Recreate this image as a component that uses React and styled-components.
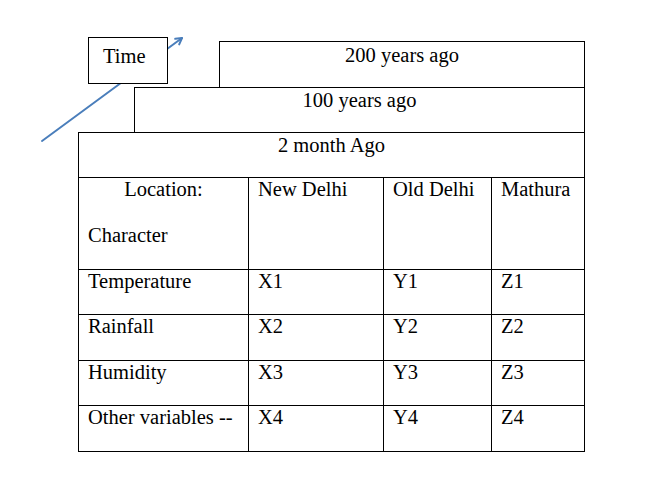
import React from "react";
import styled, { createGlobalStyle } from "styled-components";

const Global = createGlobalStyle`
  html, body { margin: 0; padding: 0; background: #ffffff; }
  body { font-family: "Liberation Serif", "Times New Roman", serif; color: #000; }
`;

const Canvas = styled.div`
  position: relative;
  width: 668px;
  height: 501px;
  padding: 41px 0 0 78px;
  box-sizing: border-box;
  overflow: hidden;
`;

const Sheet = styled.div`
  position: relative;
  z-index: 1;
  width: 507px;
  display: flex;
  flex-direction: column;
  align-items: flex-end;
`;

const TopRow = styled.div`
  width: 100%;
  display: flex;
  align-items: flex-start;
`;

const TimeBox = styled.div`
  position: relative;
  z-index: 2;
  box-sizing: border-box;
  width: 80px;
  height: 47px;
  margin: -4px 0 0 10px;
  padding: 7px 0 0 14px;
  border: 1px solid #000;
  background: #fff;
  font-size: 20.5px;
  line-height: 23px;
`;

const Band = styled.div`
  box-sizing: border-box;
  width: ${(p) => p.$width}px;
  height: ${(p) => p.$height}px;
  margin-left: auto;
  border: 1px solid #000;
  border-bottom: none;
  padding-top: ${(p) => p.$pad}px;
  text-align: center;
  font-size: 20.5px;
  line-height: 23px;
  background: #fff;
`;

const Grid = styled.div`
  box-sizing: border-box;
  width: 507px;
  display: grid;
  grid-template-columns: 170px 135px 108px 93px;
  grid-template-rows: 92px 45px 46px 45px 46px;
  border-right: 1px solid #000;
  border-bottom: 1px solid #000;
  background: #fff;
`;

const Cell = styled.div`
  box-sizing: border-box;
  border-left: 1px solid #000;
  border-top: 1px solid #000;
  padding: 0 0 0 9px;
  font-size: 20.5px;
  line-height: 23px;
  white-space: nowrap;
`;

const Para = styled.div`
  height: 46px;
  text-align: ${(p) => (p.$center ? "center" : "left")};
  margin-left: ${(p) => (p.$center ? "-9px" : "0")};
`;

const ArrowLayer = styled.svg`
  position: absolute;
  left: 0;
  top: 0;
  z-index: 0;
  pointer-events: none;
`;

const rows = [
  ["Temperature", "X1", "Y1", "Z1"],
  ["Rainfall", "X2", "Y2", "Z2"],
  ["Humidity", "X3", "Y3", "Z3"],
  ["Other variables --", "X4", "Y4", "Z4"],
];

export default function App() {
  return (
    <>
      <Global />
      <Canvas>
        <ArrowLayer width="668" height="501" viewBox="0 0 668 501">
          <g stroke="#4a7ebb" strokeWidth="2" fill="none" strokeLinecap="round" strokeLinejoin="round">
            <line x1="42" y1="141" x2="182" y2="38" />
            <polyline points="175.2,38.8 182,38 179.2,44.4" />
          </g>
        </ArrowLayer>
        <Sheet>
          <TopRow>
            <TimeBox>Time</TimeBox>
            <Band $width={366} $height={46} $pad={2}>200 years ago</Band>
          </TopRow>
          <Band $width={451} $height={45} $pad={1}>100 years ago</Band>
          <Band $width={507} $height={45} $pad={1}>2 month Ago</Band>
          <Grid>
            <Cell>
              <Para $center>Location:</Para>
              <Para>Character</Para>
            </Cell>
            <Cell>New Delhi</Cell>
            <Cell>Old Delhi</Cell>
            <Cell>Mathura</Cell>
            {rows.map((r) =>
              r.map((c, i) => <Cell key={r[0] + i}>{c}</Cell>)
            )}
          </Grid>
        </Sheet>
      </Canvas>
    </>
  );
}
